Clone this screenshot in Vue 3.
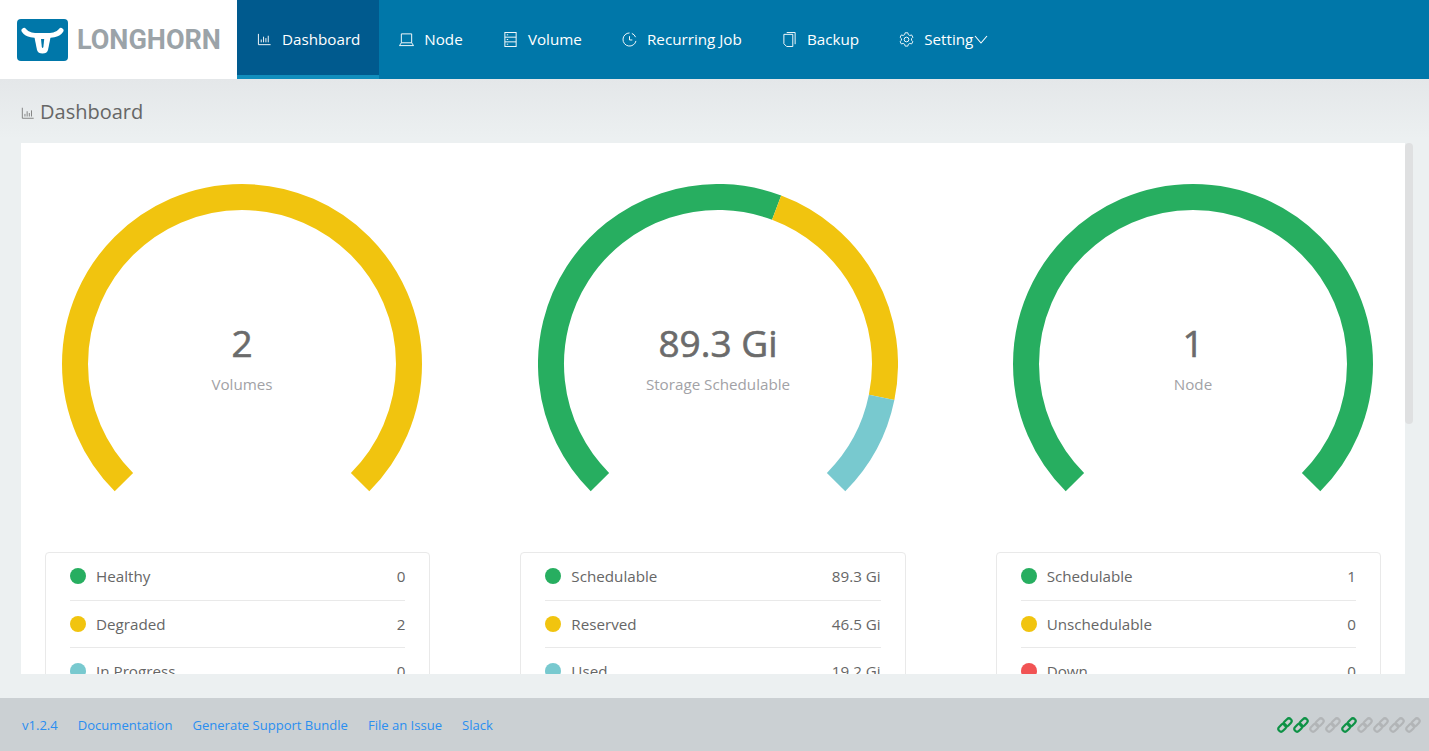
<script setup>
const R = 167
const CX = 180
const CY = 180
function point(deg) {
  const a = ((deg - 90) * Math.PI) / 180
  return `${(CX + R * Math.cos(a)).toFixed(2)} ${(CY + R * Math.sin(a)).toFixed(2)}`
}
function arcs(segments) {
  const total = segments.reduce((s, x) => s + x.value, 0)
  let start = -135
  return segments.map((seg) => {
    const sweep = (seg.value / total) * 270
    const end = start + sweep
    const d = `M ${point(start)} A ${R} ${R} 0 ${sweep > 180 ? 1 : 0} 1 ${point(end)}`
    start = end
    return { d, color: seg.color }
  })
}
const GREEN = '#27ae60'
const YELLOW = '#f1c40f'
const CYAN = '#78c9cf'
const RED = '#f15354'
const GREY = '#dee1e3'

const gauges = [
  {
    value: '2',
    label: 'Volumes',
    arcs: arcs([{ value: 1, color: YELLOW }]),
    rows: [
      { name: 'Healthy', value: '0', color: GREEN },
      { name: 'Degraded', value: '2', color: YELLOW },
      { name: 'In Progress', value: '0', color: CYAN },
      { name: 'Faulted', value: '0', color: RED },
      { name: 'Detached', value: '0', color: GREY }
    ]
  },
  {
    value: '89.3 Gi',
    label: 'Storage Schedulable',
    arcs: arcs([
      { value: 89.3, color: GREEN },
      { value: 46.5, color: YELLOW },
      { value: 19.2, color: CYAN }
    ]),
    rows: [
      { name: 'Schedulable', value: '89.3 Gi', color: GREEN },
      { name: 'Reserved', value: '46.5 Gi', color: YELLOW },
      { name: 'Used', value: '19.2 Gi', color: CYAN },
      { name: 'Disabled', value: '0 Gi', color: GREY }
    ]
  },
  {
    value: '1',
    label: 'Node',
    arcs: arcs([{ value: 1, color: GREEN }]),
    rows: [
      { name: 'Schedulable', value: '1', color: GREEN },
      { name: 'Unschedulable', value: '0', color: YELLOW },
      { name: 'Down', value: '0', color: RED },
      { name: 'Disabled', value: '0', color: GREY }
    ]
  }
]

const nav = [
  { name: 'Dashboard', icon: 'chart', active: true },
  { name: 'Node', icon: 'laptop' },
  { name: 'Volume', icon: 'db' },
  { name: 'Recurring Job', icon: 'clock' },
  { name: 'Backup', icon: 'copy' },
  { name: 'Setting', icon: 'gear', caret: true }
]

const footerLinks = ['v1.2.4', 'Documentation', 'Generate Support Bundle', 'File an Issue', 'Slack']
const links = [true, true, false, false, true, false, false, false, false]
</script>

<template>
  <div class="app">
    <header class="top">
      <div class="brand">
        <svg class="logo" viewBox="0 0 51 42" width="51" height="42">
          <rect width="51" height="42" rx="4" fill="#0077a9" />
          <path d="M7 11.500C11 17 18 16.500 25.500 16.500S40 17 44 11.500" fill="none" stroke="#fff" stroke-width="5" stroke-linecap="round" />
          <path d="M17 16L20 31Q21 34.500 25.500 34.500T31 31L34 16Z" fill="#fff" />
          <path d="M24 20H27.200L26.400 28Q25.600 30 24.800 28Z" fill="#0077a9" />
        </svg>
        <span class="wordmark">LONGHORN</span>
      </div>
      <nav class="menu">
        <a v-for="item in nav" :key="item.name" class="menu-item" :class="{ active: item.active }">
          <svg class="ico" viewBox="0 0 16 16" width="15" height="15" fill="none" stroke="currentColor" stroke-width="1">
            <template v-if="item.icon === 'chart'">
              <path d="M1.500 2v11.500h13" /><path d="M4.500 11V8M7 11V5M9.500 11V6.500M12 11V4" />
            </template>
            <template v-else-if="item.icon === 'laptop'">
              <path d="M2.500 11.500V2h11v9.500" /><path d="M.5 14.500l2-3h11l2 3z" />
            </template>
            <template v-else-if="item.icon === 'db'">
              <rect x="2" y=".5" width="12" height="15" /><path d="M2 5.500h12M2 10.500h12M4 3h1.500M4 8h1.500M4 13h1.500" />
            </template>
            <template v-else-if="item.icon === 'clock'">
              <path d="M14.900 9.500A7 7 0 1 1 8 1" /><path d="M10.500 1.500A7 7 0 0 1 14.500 5.500" /><path d="M8 4.500V8.500h3" />
            </template>
            <template v-else-if="item.icon === 'copy'">
              <path d="M5 .5h9v12.500" /><path d="M2 2.500H11.500V15.500H5L2 12.500Z" />
            </template>
            <template v-else>
              <path d="M6.500 1.500h3l.5 2 1.700 1 2-.6 1.400 2.600-1.500 1.500v1.900l1.500 1.400-1.400 2.600-2-.6-1.700 1-.5 2h-3l-.5-2-1.700-1-2 .6L.900 11.300l1.500-1.400V8L.900 6.500l1.400-2.600 2 .6 1.700-1z" transform="translate(.3 -.6) scale(.96)" />
              <circle cx="8" cy="8" r="2.500" />
            </template>
          </svg>
          <span>{{ item.name }}</span>
          <svg v-if="item.caret" class="caret" viewBox="0 0 14 9" width="14" height="9" fill="none" stroke="currentColor" stroke-width="1.100">
            <path d="M1 1l6 7 6-7" />
          </svg>
        </a>
      </nav>
    </header>

    <main class="main">
      <h1 class="title">
        <svg viewBox="0 0 16 16" width="14" height="14" fill="none" stroke="#777" stroke-width="1">
          <path d="M1.500 2v12h13" /><path d="M4.500 12V9M7 12V6M9.500 12V8M12 12V5" />
        </svg>
        <span>Dashboard</span>
      </h1>
      <div class="frame">
        <div class="scroller">
          <div class="panel">
            <section v-for="g in gauges" :key="g.label" class="col">
              <svg class="gauge" viewBox="0 0 360 308" width="360" height="308">
                <path v-for="(a, i) in g.arcs" :key="i" :d="a.d" fill="none" :stroke="a.color" stroke-width="26" />
                <text class="num" x="180" y="173" text-anchor="middle">{{ g.value }}</text>
                <text class="lbl" x="180" y="205.500" text-anchor="middle">{{ g.label }}</text>
              </svg>
              <ul class="card">
                <li v-for="r in g.rows" :key="r.name" class="row">
                  <i class="dot" :style="{ background: r.color }"></i>
                  <span class="name">{{ r.name }}</span>
                  <span class="val">{{ r.value }}</span>
                </li>
              </ul>
            </section>
          </div>
        </div>
        <div class="thumb"></div>
      </div>
    </main>

    <footer class="foot">
      <a v-for="l in footerLinks" :key="l" class="foot-link">{{ l }}</a>
      <div class="chain">
        <svg v-for="(on, i) in links" :key="i" viewBox="0 0 16 16" width="16" height="16" fill="none" :stroke="on ? '#0e9246' : '#b2b5b7'" stroke-width="2.200">
          <rect x="-4.400" y="-2.700" width="8.800" height="5.400" rx="2.700" transform="translate(5.300 10.700) rotate(-45)" />
          <rect x="-4.400" y="-2.700" width="8.800" height="5.400" rx="2.700" transform="translate(10.700 5.300) rotate(-45)" />
        </svg>
      </div>
    </footer>
  </div>
</template>

<style scoped>
.app {
  height: 751px;
  display: flex;
  flex-direction: column;
  font-family: "Open Sans", "Noto Sans", sans-serif;
  color: #666;
}
.top {
  height: 79px;
  flex: none;
  display: flex;
  background: #0077a9;
}
.brand {
  width: 237px;
  background: #fff;
  display: flex;
  align-items: center;
  padding-left: 17px;
  box-sizing: border-box;
  gap: 9px;
}
.logo {
  display: block;
}
.wordmark {
  font-family: Roboto, sans-serif;
  font-weight: 700;
  font-size: 27px;
  color: #9ba3a8;
}
.menu {
  display: flex;
}
.menu-item {
  display: flex;
  align-items: center;
  padding: 0 20.100px 2px;
  color: #fff;
  font-size: 15.200px;
  box-sizing: border-box;
  height: 79px;
}
.menu-item.active {
  background: #005a8e;
  border-bottom: 4px solid #108ebd;
  padding: 2px 18.800px 0 20px;
}
.ico {
  margin: 2px 10px 0 0;
  flex: none;
}
.caret {
  margin: 2px 0 0 1px;
}
.main {
  flex: 1;
  min-height: 0;
  display: flex;
  flex-direction: column;
  padding: 0 16px 24px 21px;
  background: linear-gradient(#e4e7e9, #ecf0f1 60px);
}
.title {
  height: 64px;
  flex: none;
  margin: 0;
  display: flex;
  align-items: center;
  gap: 5px;
  font-size: 20px;
  font-weight: 400;
  color: #666;
}
.title svg {
  margin-top: 4px;
}
.frame {
  flex: 1;
  min-height: 0;
  position: relative;
  margin-right: 8px;
}
.scroller {
  height: 100%;
  overflow: hidden;
}
.thumb {
  position: absolute;
  left: 100%;
  top: 0;
  width: 8px;
  height: 281px;
  background: #dfe0e1;
  border-radius: 4px;
}
.panel {
  background: #fff;
  height: 1003px;
  box-sizing: border-box;
  padding: 41px 24px 0;
  display: grid;
  grid-template-columns: repeat(3, 1fr);
  column-gap: 90px;
  align-content: start;
}
.col {
  min-width: 0;
}
.gauge {
  display: block;
  margin-left: 17.200px;
}
.num {
  font-size: 37px;
  font-weight: 400;
  fill: #6b6b6b;
  stroke: #6b6b6b;
  stroke-width: 0.6px;
}
.lbl {
  font-size: 15.200px;
  fill: #a2a2a6;
}
.card {
  list-style: none;
  margin: 60px 0 0;
  padding: 0 24px;
  border: 1px solid #e9e9e9;
  border-radius: 4px;
}
.row {
  height: 47.500px;
  display: flex;
  align-items: center;
  box-sizing: border-box;
  border-bottom: 1px solid #e9e9e9;
  font-size: 15.200px;
  color: #666;
}
.row:last-child {
  border-bottom: 0;
}
.dot {
  width: 16px;
  height: 16px;
  border-radius: 50%;
  margin-right: 10px;
  flex: none;
}
.name {
  flex: 1;
}
.foot {
  height: 53px;
  flex: none;
  display: flex;
  align-items: center;
  background: #cbd0d3;
  padding: 0 8px 0 22px;
  gap: 20px;
  font-size: 13.050px;
}
.foot-link {
  color: #2a8ef0;
}
.chain {
  margin-left: auto;
  display: flex;
}
</style>

<style>
html, body {
  margin: 0;
  overflow: hidden;
}
</style>
